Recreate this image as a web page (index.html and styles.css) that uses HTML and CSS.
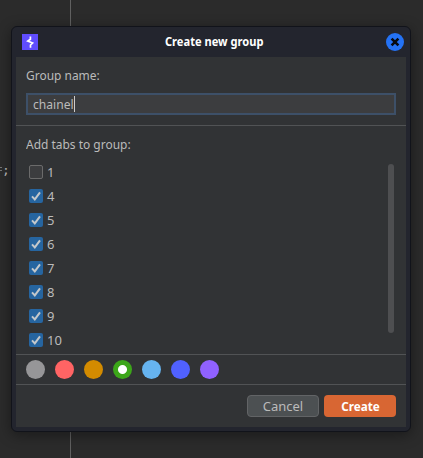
FILE: index.html
```html
<!DOCTYPE html>
<html lang="en">
<head>
<meta charset="utf-8">
<title>Create new group</title>
<link rel="stylesheet" href="styles.css">
</head>
<body>
<span class="editor-code">;</span>
<span class="editor-mark"></span>
<section class="window" role="dialog">
  <header class="titlebar">
    <svg class="logo" viewBox="0 0 16 16"><rect width="16" height="16" fill="#604dff"/><path d="M8.4 2.4v2.8L5.8 7l4.8 2-2.1 2v2.8" fill="none" stroke="#fff" stroke-width="1.7"/></svg>
    <h1>Create new group</h1>
    <svg class="close" viewBox="0 0 18 18"><circle cx="9" cy="9" r="9" fill="#2472f5"/><path d="M5.6 5.6l6.8 6.8M12.4 5.6l-6.8 6.8" stroke="#080b12" stroke-width="2.6"/></svg>
  </header>
  <main class="content">
    <div class="name-section">
      <label class="label">Group name:</label>
      <div class="field"><span class="text">chainel</span><span class="caret"></span></div>
    </div>
    <div class="tabs-section">
      <div class="label">Add tabs to group:</div>
      <div class="scroll-area">
        <ul class="tabs">
          <li><span class="box"></span><span>1</span></li>
          <li><span class="box checked"><svg viewBox="0 0 14 14"><path d="M3 7.4l2.8 3L11 3.4"/></svg></span><span>4</span></li>
          <li><span class="box checked"><svg viewBox="0 0 14 14"><path d="M3 7.4l2.8 3L11 3.4"/></svg></span><span>5</span></li>
          <li><span class="box checked"><svg viewBox="0 0 14 14"><path d="M3 7.4l2.8 3L11 3.4"/></svg></span><span>6</span></li>
          <li><span class="box checked"><svg viewBox="0 0 14 14"><path d="M3 7.4l2.8 3L11 3.4"/></svg></span><span>7</span></li>
          <li><span class="box checked"><svg viewBox="0 0 14 14"><path d="M3 7.4l2.8 3L11 3.4"/></svg></span><span>8</span></li>
          <li><span class="box checked"><svg viewBox="0 0 14 14"><path d="M3 7.4l2.8 3L11 3.4"/></svg></span><span>9</span></li>
          <li><span class="box checked"><svg viewBox="0 0 14 14"><path d="M3 7.4l2.8 3L11 3.4"/></svg></span><span>10</span></li>
        </ul>
        <div class="scrollbar"></div>
      </div>
    </div>
    <div class="colors">
      <span class="dot gray"></span><span class="dot red"></span><span class="dot amber"></span><span class="dot green"></span><span class="dot sky"></span><span class="dot blue"></span><span class="dot violet"></span>
    </div>
    <footer class="actions">
      <button class="cancel">Cancel</button>
      <button class="create"><span>Create</span></button>
    </footer>
  </main>
</section>
</body>
</html>
```
FILE: styles.css
```css
* { box-sizing: border-box; }
body {
  margin: 0;
  height: 458px;
  padding: 26px 12px 26px 11px;
  overflow: hidden;
  background: linear-gradient(#606060, #606060) 70px 0 / 1px 100% no-repeat #2b2b2b;
  font: 13px/18px "Noto Sans", sans-serif;
  color: #bbb;
}
.editor-code {
  position: absolute;
  left: 2px;
  top: 161px;
  font: 13px/18px "DejaVu Sans Mono", monospace;
}
.editor-mark {
  position: absolute;
  left: 0;
  top: 167px;
  width: 2px;
  height: 4px;
  border: solid #777;
  border-width: 1px 0;
}
.window {
  position: relative;
  width: 400px;
  height: 406px;
  padding: 0 4px 4px;
  border: 1px solid #11131a;
  border-radius: 6px;
  background: #23252e;
  box-shadow: 0 3px 14px rgba(0, 0, 0, .4);
}
.titlebar {
  display: flex;
  align-items: center;
  justify-content: space-between;
  height: 30px;
  padding: 0 2px 0 6px;
}
.logo { width: 16px; height: 16px; }
.close { width: 18px; height: 18px; }
h1 { margin: 0 -4px 0 0; font-size: 12px; line-height: 18px; color: #fff; transform: scaleX(.925); }
.content { height: 370px; background: #313335; }
.name-section { height: 69px; padding: 9px 10px 0; border-bottom: 1px solid #515355; }
.label { display: block; width: max-content; height: 18px; transform: scaleX(.92); transform-origin: left; }
.field {
  display: flex;
  align-items: center;
  height: 22px;
  margin-top: 9px;
  padding-left: 5px;
  border: 2px solid #3d5068;
  background: #3c3d3f;
}
.text { margin-right: -3px; transform: scaleX(.93); transform-origin: left; }
.caret { width: 1px; height: 16px; background: #ccc; }
.tabs-section { height: 229px; padding: 9px 10px 0; border-bottom: 1px solid #515355; }
.scroll-area { display: flex; justify-content: space-between; padding: 7px 2px 0 3px; }
.tabs { margin: 0; padding: 0; list-style: none; }
.tabs li { display: flex; align-items: center; gap: 4px; height: 24px; }
.box { width: 14px; height: 14px; border: 1px solid #6b6b6b; border-radius: 2px; background: #3c3d3f; }
.box.checked { border: 0; background: #2665a0; }
.box svg { display: block; width: 14px; height: 14px; fill: none; stroke: #c4c8cb; stroke-width: 2; }
.scrollbar { width: 6px; height: 169px; margin-top: 4px; border-radius: 3px; background: #4e4f51; }
.colors { display: flex; gap: 10px; height: 30px; padding: 5px 10px; border-bottom: 1px solid #515355; }
.dot { width: 19px; height: 19px; border-radius: 50%; }
.gray { background: #969698; }
.red { background: #ff6464; }
.amber { background: #d38b00; }
.green { background: radial-gradient(circle, #fff 4px, #3ca619 5px); }
.sky { background: #66b4f0; }
.blue { background: #5061ff; }
.violet { background: #9061ff; }
.actions { display: flex; justify-content: flex-end; gap: 5px; padding: 10px; }
button { width: 72px; height: 22px; padding: 0; border-radius: 4px; font: 13px/18px "Noto Sans", sans-serif; }
.cancel { border: 1px solid #626466; background: #4c5052; color: #bbb; }
.create { border: 0; background: #d86633; color: #fff; font-weight: 700; }
.create span { display: inline-block; transform: scaleX(.9); }
```
